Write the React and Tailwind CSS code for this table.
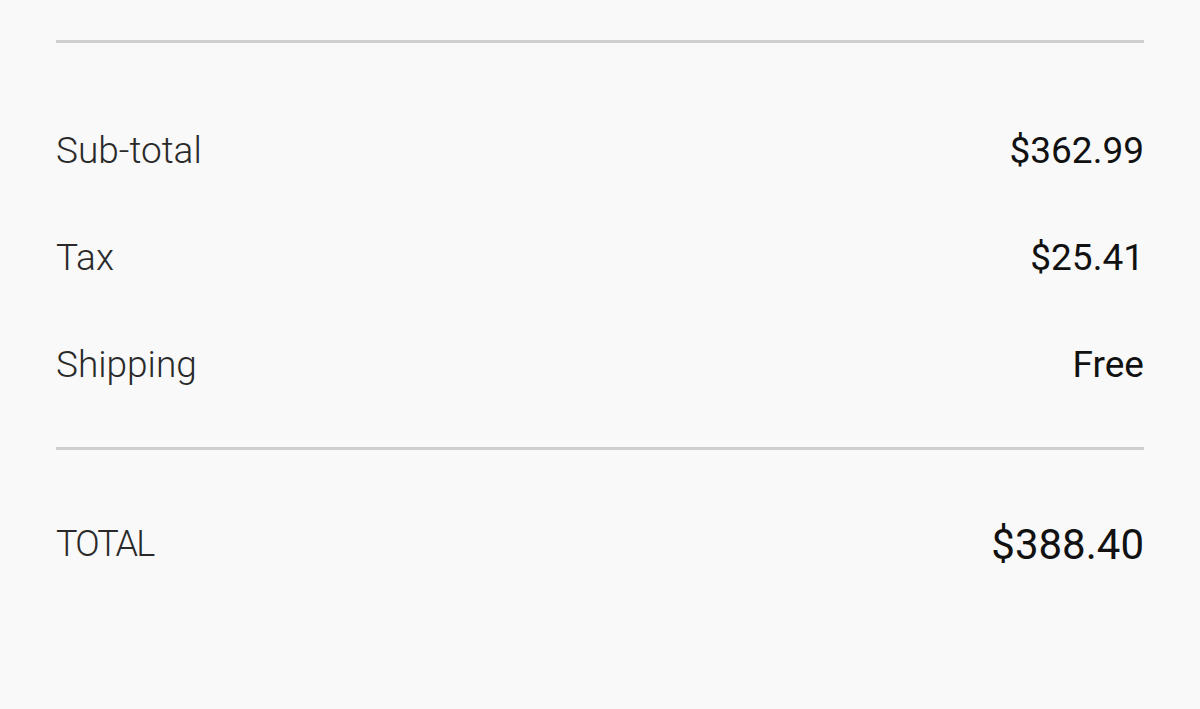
import React from 'react';

const rows = [
  { label: 'Sub-total', value: '$362.99' },
  { label: 'Tax', value: '$25.41' },
  { label: 'Shipping', value: 'Free' },
];

const App = () => {
  return (
    <div className="min-h-[709px] bg-[#f9f9f9] px-[56px] pt-[40px] font-['Roboto',sans-serif]">
      <hr className="border-0 h-[3px] bg-[#cfcfcf]" />

      <div className="pt-[86px] pb-[60px] flex flex-col gap-[63px]">
        {rows.map((row) => (
          <div key={row.label} className="flex items-center justify-between h-[44px]">
            <span className="text-[37px] font-light text-[#2a2a2a]">{row.label}</span>
            <span className="text-[37px] font-normal text-[#111]">{row.value}</span>
          </div>
        ))}
      </div>

      <hr className="border-0 h-[3px] bg-[#cfcfcf]" />

      <div className="pt-[70px] flex items-center justify-between h-[48px] box-content">
        <span className="text-[36px] font-light tracking-[-0.05em] text-[#2a2a2a]">TOTAL</span>
        <span className="text-[42px] font-normal text-[#111]">$388.40</span>
      </div>
    </div>
  );
};

export default App;
